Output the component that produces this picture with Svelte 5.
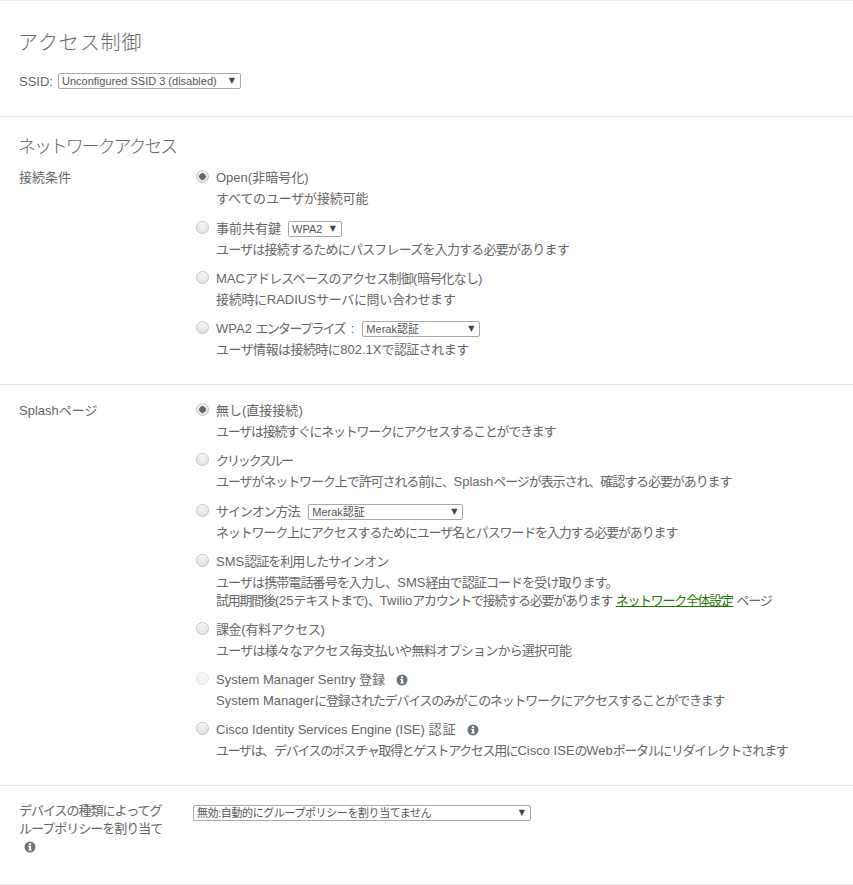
<script>
	// ls = tracking for the japanese runs of a line, latin stays as it is
	const authOptions = [
		{ id: 'open', checked: true, extra: true, title: 'Open(非暗号化)', ls: 0, desc: 'すべてのユーザが接続可能', dls: -0.17 },
		{ id: 'psk', title: '事前共有鍵', ls: 0, select: { value: 'WPA2', cls: 'sel-wpa' }, desc: 'ユーザは接続するためにパスフレーズを入力する必要があります', dls: -0.8 },
		{ id: 'mac', title: 'MACアドレスベースのアクセス制御(暗号化なし)', ls: -0.84, desc: '接続時にRADIUSサーバに問い合わせます', dls: -0.3 },
		{ id: 'ent', title: 'WPA2 エンタープライズ', colon: true, ls: -1.7, select: { value: 'Merak認証', cls: 'sel-ent' }, desc: 'ユーザ情報は接続時に802.1Xで認証されます', dls: -0.55 }
	];

	const splashOptions = [
		{ id: 'none', checked: true, title: '無し(直接接続)', ls: 0, desc: 'ユーザは接続すぐにネットワークにアクセスすることができます', dls: -1.27 },
		{ id: 'click', extra: true, title: 'クリックスルー', ls: -2.1, desc: 'ユーザがネットワーク上で許可される前に、Splashページが表示され、確認する必要があります', dls: -1.09 },
		{ id: 'signon', title: 'サインオン方法', ls: -1.1, select: { value: 'Merak認証', cls: 'sel-sign' }, desc: 'ネットワーク上にアクセスするためにユーザ名とパスワードを入力する必要があります', dls: -1.15 },
		{ id: 'sms', title: 'SMS認証を利用したサインオン', ls: -1, desc: 'ユーザは携帯電話番号を入力し、SMS経由で認証コードを受け取ります。', dls: -0.9, sms: true },
		{ id: 'bill', title: '課金(有料アクセス)', ls: -0.4, desc: 'ユーザは様々なアクセス毎支払いや無料オプションから選択可能', dls: -0.72 },
		{ id: 'sentry', disabled: true, info: true, title: 'System Manager Sentry 登録', ls: 0, desc: 'System Managerに登録されたデバイスのみがこのネットワークにアクセスすることができます', dls: -1.26 },
		{ id: 'ise', info: true, title: 'Cisco Identity Services Engine (ISE) 認証', ls: 1, desc: 'ユーザは、デバイスのポスチャ取得とゲストアクセス用にCisco ISEのWebポータルにリダイレクトされます', dls: -1.35 }
	];

	function runs(text) {
		return text.split(/([\u3000-\u9fff\uff00-\uffef]+)/).map((t, i) => ({ t, cjk: i % 2 === 1 }));
	}
</script>

{#snippet fit(text, ls)}
	<span style="--ls:{ls}px">{#each runs(text) as r}{#if r.cjk}<span class="cjk">{r.t}</span>{:else}{r.t}{/if}{/each}</span>
{/snippet}

{#snippet info()}
	<svg class="info" viewBox="0 0 12 12" width="12" height="12">
		<circle cx="6" cy="6" r="5.5" fill="#6b7580" />
		<rect x="4.9" y="2.3" width="2.2" height="1.9" fill="#fff" />
		<path d="M4.2 5h2.9v3.6h.8v1H4.2v-1H5V6H4.2z" fill="#fff" />
	</svg>
{/snippet}

{#snippet dropdown(value, cls)}
	<span class="select {cls}">
		<span class="select-text">{value}</span>
		<span class="arrow">▼</span>
	</span>
{/snippet}

{#snippet options(list, name)}
	<div class="options">
		{#each list as opt (opt.id)}
			<div class="option" class:extra={opt.extra}>
				<input type="radio" {name} checked={opt.checked} disabled={opt.disabled} />
				<div class="option-body">
					<div class="option-title">
						{@render fit(opt.title, opt.ls)}
						{#if opt.colon}
							<span class="colon">:</span>
						{/if}
						{#if opt.select}
							{@render dropdown(opt.select.value, opt.select.cls)}
						{/if}
						{#if opt.info}
							{@render info()}
						{/if}
					</div>
					<div class="desc">{@render fit(opt.desc, opt.dls)}</div>
					{#if opt.sms}
						<div class="desc sms-line">
							{@render fit('試用期間後(25テキストまで)、Twilioアカウントで接続する必要があります', -1.25)}
							<a href="#network">{@render fit('ネットワーク全体設定', -1.3)}</a>
							{@render fit('ページ', -1)}
						</div>
					{/if}
				</div>
			</div>
		{/each}
	</div>
{/snippet}

<div class="page">
	<section class="top">
		<h1>アクセス制御</h1>
		<div class="ssid">
			<span>SSID:</span>
			{@render dropdown('Unconfigured SSID 3 (disabled)', 'sel-ssid')}
		</div>
	</section>

	<section class="network">
		<h2>ネットワークアクセス</h2>
		<div class="row">
			<div class="label">接続条件</div>
			{@render options(authOptions, 'auth')}
		</div>
	</section>

	<section class="splash">
		<div class="row">
			<div class="label">Splashページ</div>
			{@render options(splashOptions, 'splash')}
		</div>
	</section>

	<section class="policy">
		<div class="row">
			<div class="label policy-label">
				デバイスの種類によってグループポリシーを割り当て
				<div class="policy-info">{@render info()}</div>
			</div>
			{@render dropdown('無効:自動的にグループポリシーを割り当てません', 'sel-policy')}
		</div>
	</section>
</div>

<style>
	:global(body) {
		background: #fff;
		font-family: 'Liberation Sans', 'Noto Sans CJK JP', sans-serif;
		font-size: 13px;
		color: #666;
	}

	.page {
		width: 853px;
		height: 885px;
		overflow: hidden;
		border-top: 1px solid #eee;
		box-sizing: border-box;
	}

	section {
		border-bottom: 1px solid #e6e6e6;
		padding: 0 19px;
		box-sizing: border-box;
	}

	.top {
		height: 116px;
		padding-top: 29px;
	}

	h1 {
		margin: 0 0 0 -1px;
		font-size: 20px;
		font-weight: 300;
		line-height: 26px;
		letter-spacing: 0.9px;
		color: #666;
	}

	.ssid {
		display: flex;
		align-items: center;
		gap: 5px;
		margin-top: 15px;
		height: 20px;
	}

	.network {
		height: 268px;
		padding-top: 18px;
	}

	h2 {
		margin: 0 0 8px -1px;
		font-size: 18px;
		font-weight: 300;
		line-height: 24px;
		letter-spacing: -2.1px;
		color: #666;
	}

	.splash {
		height: 401px;
		padding-top: 15px;
	}

	.policy {
		height: 99px;
		padding-top: 16px;
	}

	.row {
		display: flex;
		align-items: flex-start;
	}

	.label {
		width: 177px;
		flex: none;
		line-height: 20px;
		padding-top: 1px;
	}

	.policy-label {
		width: 150px;
		margin-right: 24px;
		line-height: 18px;
		padding-top: 0;
		letter-spacing: -1px;
	}

	.policy-info {
		padding-left: 5px;
		height: 18px;
		display: flex;
		align-items: center;
	}

	.options {
		display: flex;
		flex-direction: column;
		gap: 8px;
	}

	.option {
		display: flex;
		align-items: flex-start;
	}

	.extra {
		margin-bottom: 1px;
	}

	input[type='radio'] {
		appearance: none;
		width: 13px;
		height: 13px;
		flex: none;
		margin: 3px 7px 0 0;
		border-radius: 50%;
		border: 1px solid #c4c4c4;
		background: radial-gradient(circle at 50% 40%, #f4f4f4, #dcdcdc);
		box-shadow: inset 0 1px 1px #fff;
		box-sizing: border-box;
	}

	input[type='radio']:checked {
		background: radial-gradient(circle, #666 0 3px, #e4e4e4 3.6px);
	}

	input[type='radio']:disabled {
		border-color: #e4e4e4;
		background: #f4f4f4;
	}

	.option-title {
		display: flex;
		align-items: center;
		gap: 7px;
		min-height: 21px;
		line-height: 21px;
		white-space: nowrap;
	}

	.cjk {
		letter-spacing: var(--ls);
	}

	.colon {
		margin-left: -1px;
	}

	.desc {
		line-height: 21px;
		white-space: nowrap;
	}

	.sms-line {
		margin-top: -3px;
	}

	a {
		color: #1f7a00;
		text-decoration: underline;
	}

	.info {
		flex: none;
		margin-left: 4px;
	}

	.policy-info .info {
		margin-left: 0;
	}

	.select {
		display: inline-flex;
		align-items: center;
		justify-content: space-between;
		height: 14px;
		padding: 0 5px 0 3px;
		border: 1px solid #a9a9a9;
		border-radius: 2px;
		background: #fff;
		font-size: 11px;
		line-height: 14px;
		color: #555;
		box-sizing: content-box;
		white-space: nowrap;
	}

	.arrow {
		font-size: 8px;
		color: #444;
		font-family: 'DejaVu Sans', sans-serif;
	}

	.sel-ssid {
		width: 173px;
	}

	.sel-wpa {
		width: 44px;
	}

	.sel-ent {
		width: 108px;
		margin-left: 1px;
	}

	.sel-sign {
		width: 145px;
		margin-left: 2px;
	}

	.sel-policy {
		width: 328px;
		margin-top: 3px;
	}

	.sel-policy .select-text {
		letter-spacing: -0.4px;
	}
</style>
